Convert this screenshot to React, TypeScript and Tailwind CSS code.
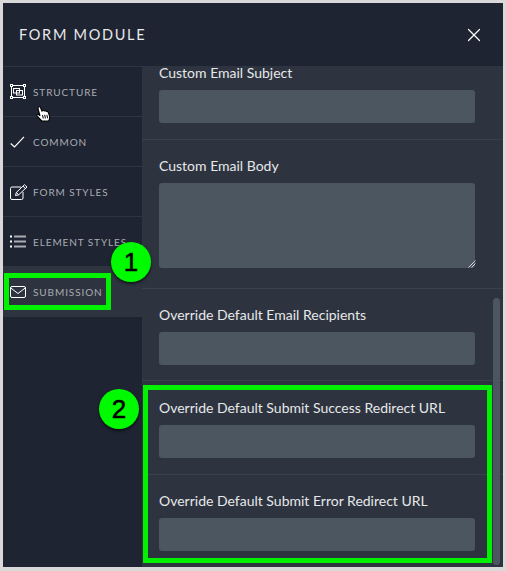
import React from "react";
import { X } from "lucide-react";

const StructureIcon = () => (
  <svg width="16" height="15" viewBox="0 0 16 15" fill="none" stroke="white" strokeWidth="1">
    <rect x="1.500" y="1.500" width="13" height="12" />
    <rect x="3.500" y="4.500" width="6" height="4.500" />
    <rect x="6.500" y="6.500" width="6" height="4.500" />
    <rect x="0.500" y="0.500" width="2" height="2" fill="#1f2432" />
    <rect x="13.500" y="0.500" width="2" height="2" fill="#1f2432" />
    <rect x="0.500" y="12.500" width="2" height="2" fill="#1f2432" />
    <rect x="13.500" y="12.500" width="2" height="2" fill="#1f2432" />
  </svg>
);

const CheckIcon = () => (
  <svg width="15" height="12" viewBox="0 0 15 12" fill="none" stroke="white" strokeWidth="1.200">
    <path d="M0.700 7.500L4.500 11L14 0.800" />
  </svg>
);

const PencilBoxIcon = () => (
  <svg width="18" height="16" viewBox="0 0 18 16" fill="none" stroke="white" strokeWidth="1">
    <path d="M11 3H2a1.500 1.500 0 0 0-1.500 1.500V14A1.500 1.500 0 0 0 2 15.500h9.500A1.500 1.500 0 0 0 13 14V8" />
    <path d="M5.500 11.500l.8-3L14.500 0.700l2.500 2.300-8.300 7.800z" />
    <path d="M13 2.200l2.500 2.300M6.300 8.500l2.400 2.300" />
  </svg>
);

const ListIcon = () => (
  <svg width="16" height="13" viewBox="0 0 16 13" fill="none">
    <rect x="0" y="0.500" width="2" height="2" fill="white" />
    <rect x="0" y="5.500" width="2" height="2" fill="white" />
    <rect x="0" y="10.500" width="2" height="2" fill="white" />
    <rect x="4" y="0.500" width="12" height="2" fill="#a9adb3" />
    <rect x="4" y="5.500" width="12" height="2" fill="#a9adb3" />
    <rect x="4" y="10.500" width="12" height="2" fill="#a9adb3" />
  </svg>
);

const MailIcon = () => (
  <svg width="16" height="12" viewBox="0 0 16 12" fill="none" stroke="white" strokeWidth="1">
    <rect x="0.500" y="0.500" width="15" height="11" rx="1.500" />
    <path d="M0.800 2L8 7.500L15.200 2" />
  </svg>
);

const HandCursor = () => (
  <svg width="15" height="16" viewBox="0 0 15 16">
    <path
      d="M2.500 1c.8-.6 1.800-.2 2.100.7l1.400 3.600.3-.7c.7-.6 1.700-.4 2 .4.600-.5 1.700-.4 2 .5.700-.4 1.600-.1 1.900.7l1.200 3.300c.6 2.100.2 3.800-.8 5.500H5.800C4.400 13.500 2.600 11.700 1 10c-.8-.9.200-2.100 1.400-1.500l1.500 1L2.100 2.800C1.900 2 2 1.400 2.500 1z"
      fill="white"
      stroke="black"
      strokeWidth="1.100"
      strokeLinejoin="round"
    />
    <path d="M6.500 9l.8 3.500M8.700 8.800l.7 3.700M10.900 8.800l.7 3.500" stroke="black" strokeWidth="1" />
  </svg>
);

const navItems = [
  { label: "Structure", icon: <StructureIcon /> },
  { label: "Common", icon: <CheckIcon /> },
  { label: "Form Styles", icon: <PencilBoxIcon /> },
  { label: "Element Styles", icon: <ListIcon /> },
  { label: "Submission", icon: <MailIcon />, active: true },
];

const Field = ({ label, className }: { label: string; className: string }) => (
  <div className={`border-b border-[#3b414c] px-[17px] ${className}`}>
    <div className="text-[14px] leading-[18px] text-[#e6e8ea]">{label}</div>
    <div className="mt-[8px] h-[33px] w-[316px] rounded-[3px] bg-[#4b5661]" />
  </div>
);

const App = () => {
  return (
    <div
      className="relative h-[571px] w-[506px] overflow-hidden bg-[#d9d9d9] p-[3px] pb-[4px]"
      style={{ fontFamily: "Lato, sans-serif" }}
    >
      <div className="flex h-full w-[500px] flex-col bg-[#1f2432]">
        {/* Header */}
        <div className="flex h-[63px] shrink-0 items-center justify-between pl-[16px] pr-[18px]">
          <span className="text-[14.5px] tracking-[1.7px] text-[#e8e9eb]">FORM MODULE</span>
          <X size={22} color="white" strokeWidth={1.3} />
        </div>

        <div className="flex min-h-0 flex-1 border-t border-[#2e3440]">
          {/* Sidebar */}
          <div className="w-[139px] shrink-0">
            {navItems.map((item) => (
              <div
                key={item.label}
                className={`flex h-[50px] items-center border-b border-[#2e3440] pl-[7px] ${
                  item.active ? "bg-[#2e343f]" : ""
                }`}
              >
                <span className="flex w-[23px] items-center justify-start">{item.icon}</span>
                <span className="translate-y-[1px] text-[10px] uppercase tracking-[0.9px] text-[#a8acb2] whitespace-nowrap">
                  {item.label}
                </span>
              </div>
            ))}
          </div>

          {/* Content */}
          <div className="relative min-h-0 flex-1 bg-[#2e343f]">
            <div className="h-[73px] border-b border-[#3b414c] px-[17px]">
              <div className="text-[14px] leading-[12px] text-[#e6e8ea]">Custom Email Subject</div>
              <div className="mt-[11px] h-[33px] w-[316px] rounded-[3px] bg-[#4b5661]" />
            </div>
            <div className="h-[149px] border-b border-[#3b414c] px-[17px] pt-[17px]">
              <div className="text-[14px] leading-[18px] text-[#e6e8ea]">Custom Email Body</div>
              <div className="mt-[8px] h-[85px] w-[316px] rounded-[3px] bg-[#4b5661]" />
            </div>
            <Field label="Override Default Email Recipients" className="h-[92px] pt-[17px]" />
            <Field label="Override Default Submit Success Redirect URL" className="h-[94px] pt-[18px]" />
            <Field label="Override Default Submit Error Redirect URL" className="h-[92px] pt-[17px] border-b-0" />

            {/* Textarea resize handle */}
            <svg className="absolute left-[326px] top-[193px]" width="8" height="8" viewBox="0 0 8 8">
              <path d="M0.500 7.500L7.500 0.500M3.500 7.500L7.500 3.500" stroke="#d5d8db" strokeWidth="1" />
            </svg>

            {/* Scrollbar */}
            <div className="absolute left-[351px] top-[231px] h-[267px] w-[7px] rounded-full bg-[#4b5661]" />
          </div>
        </div>
      </div>

      {/* Annotations */}
      <div className="absolute left-[4px] top-[273px] h-[37px] w-[107px] border-[5px] border-[#00f200]" />
      <div className="absolute left-[143px] top-[385px] h-[178px] w-[349px] border-[5px] border-[#00f200]" />
      <div className="absolute left-[111px] top-[242px] flex h-[40px] w-[40px] items-center justify-center rounded-full bg-[#00fa00] text-[26px] text-black shadow-[0_2px_3px_rgba(0,0,0,0.6)] [-webkit-text-stroke:0.5px_black]" style={{ fontFamily: "'Liberation Sans', sans-serif" }}>
        1
      </div>
      <div className="absolute left-[99px] top-[389px] flex h-[40px] w-[40px] items-center justify-center rounded-full bg-[#00fa00] text-[26px] text-black shadow-[0_2px_3px_rgba(0,0,0,0.6)] [-webkit-text-stroke:0.5px_black]" style={{ fontFamily: "'Liberation Sans', sans-serif" }}>
        2
      </div>
      <div className="absolute left-[36px] top-[106px]">
        <HandCursor />
      </div>
    </div>
  );
};

export default App;
